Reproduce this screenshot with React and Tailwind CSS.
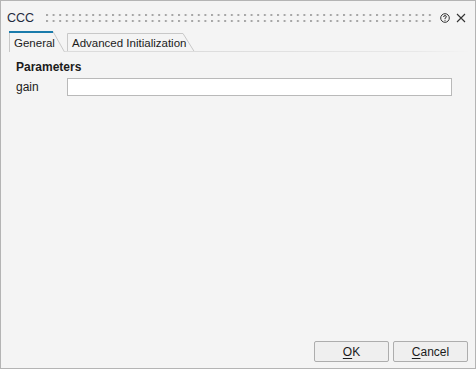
import React, { useState } from 'react';

const font = { fontFamily: '"Liberation Sans", Arial, sans-serif' };

// dotted drag grip in the title bar
const Grip = () => (
  <svg className="flex-1 h-[8px] ml-[12px] mr-[8px]">
    <defs>
      <pattern id="dots" width="6.6" height="6" patternUnits="userSpaceOnUse">
        <rect x="0" y="0" width="2" height="2" fill="#a6a6a6" />
      </pattern>
    </defs>
    <rect width="100%" height="8" fill="url(#dots)" />
  </svg>
);

const Tab = ({ label, active, width, height, onClick }) => (
  <div
    onClick={onClick}
    className={`relative shrink-0 cursor-default ${active ? 'bg-[#f4f4f4]' : ''}`}
    style={{ width, height }}
  >
    <svg className="absolute inset-0" width={width} height={height}>
      <path
        d={`M0.5 ${height} V0.5 H${width - 12} L${width - 0.5} ${height}`}
        fill="none"
        stroke="#c8c8c8"
      />
      {active && <line x1="0" y1="1" x2={width - 12} y2="1" stroke="#1a7bab" strokeWidth="2" />}
      {!active && <line x1="0" y1={height - 0.5} x2={width} y2={height - 0.5} stroke="#dcdcdc" />}
    </svg>
    <span className={`absolute left-[5px] text-[11.5px] text-[#1b1b1b] ${active ? 'top-[4px]' : 'top-[2px]'}`}>
      {label}
    </span>
  </div>
);

const App = () => {
  const [tab, setTab] = useState('General');

  return (
    <div
      className="w-[476px] h-[369px] border border-[#b4b4b4] bg-[#f4f4f4] flex flex-col"
      style={font}
    >
      {/* Title bar */}
      <div className="mt-[8px] h-[18px] flex items-center pl-[6px] pr-[9px]">
        <span className="text-[12.5px] text-[#1f2b40]">CCC</span>
        <Grip />
        <svg width="10" height="10" viewBox="0 0 10 10" className="mr-[6px]">
          <circle cx="5" cy="5" r="4.3" fill="none" stroke="#333" strokeWidth="1" />
          <path d="M3.6 4 Q3.6 2.6 5 2.6 Q6.4 2.6 6.4 3.8 Q6.4 4.6 5 5.2 V6" fill="none" stroke="#333" strokeWidth="1" />
          <rect x="4.5" y="6.8" width="1" height="1" fill="#333" />
        </svg>
        <svg width="10" height="10" viewBox="0 0 10 10">
          <path d="M1 1 L9 9 M9 1 L1 9" stroke="#333" strokeWidth="1.1" />
        </svg>
      </div>

      {/* Tabs */}
      <div className="mt-[4px] flex items-end pl-[8px] pr-[5px]">
        <Tab label="General" active={tab === 'General'} width={56} height={21} onClick={() => setTab('General')} />
        <div className="w-[2px] h-[1px] bg-[#dcdcdc]" />
        <Tab
          label="Advanced Initialization"
          active={tab === 'Advanced'}
          width={128}
          height={19}
          onClick={() => setTab('Advanced')}
        />
        <div className="flex-1 h-[1px] bg-[linear-gradient(to_right,#dcdcdc,#e8e8e8_80%,#f4f4f4)]" />
      </div>

      {/* Parameters */}
      <div className="px-[15px] pt-[8px]">
        <div className="text-[12px] font-bold text-[#1b1b1b] leading-[14px]">Parameters</div>
        <div className="mt-[4px] flex items-center">
          <label className="w-[51px] text-[12px] text-[#1b1b1b]">gain</label>
          <input
            type="text"
            className="w-[385px] h-[18px] bg-white border border-[#b9b9b9] outline-none text-[12px] px-[3px]"
          />
        </div>
      </div>

      <div className="flex-1" />

      {/* Footer buttons */}
      <div className="flex justify-end gap-[4px] pr-[7px] pb-[6px]">
        <button className="w-[75px] h-[21px] rounded-[2px] border border-[#adadad] bg-[#efefef] text-[12px] text-[#1b1b1b]">
          <span className="underline underline-offset-2">O</span>K
        </button>
        <button className="w-[75px] h-[21px] rounded-[2px] border border-[#adadad] bg-[#efefef] text-[12px] text-[#1b1b1b]">
          <span className="underline underline-offset-2">C</span>ancel
        </button>
      </div>
    </div>
  );
};

export default App;
